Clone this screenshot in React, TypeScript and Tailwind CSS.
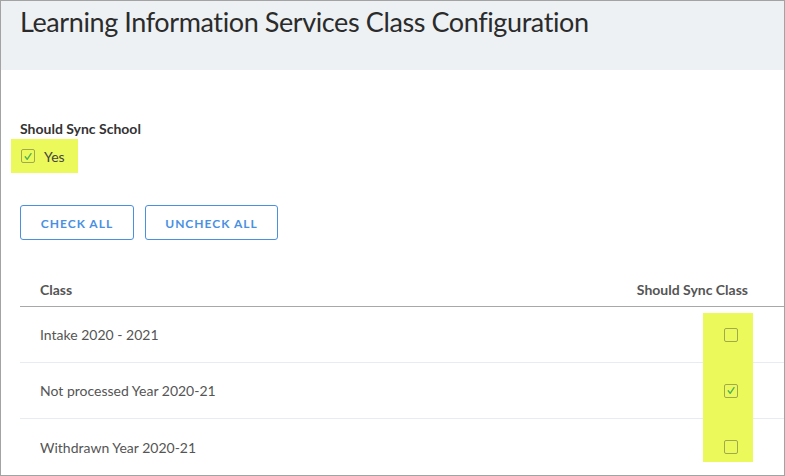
import React from "react";

const Check = () => (
  <svg viewBox="0 0 13 13" className="w-[13px] h-[13px]">
    <path d="M3.5 6.8 L5.6 9.6 L9.8 3.4" fill="none" stroke="#4fb35a" strokeWidth="1.5" strokeLinecap="round" strokeLinejoin="round" />
  </svg>
);

const Box = ({ checked }: { checked?: boolean }) => (
  <span className="relative z-10 flex items-center justify-center w-[14px] h-[14px] border border-[#a2a84c] rounded-[2px]">
    {checked && <Check />}
  </span>
);

const rows = [
  { name: "Intake 2020 - 2021", checked: false },
  { name: "Not processed Year 2020-21", checked: true },
  { name: "Withdrawn Year 2020-21", checked: false },
];

export default function App() {
  return (
    <div className="w-[785px] h-[476px] border border-[#a3a3a3] bg-white overflow-hidden font-['Lato',sans-serif]">
      <div className="h-[69px] bg-[#edf1f4] px-[19px] pt-[3px]">
        <h1 className="text-[27px] leading-[36px] text-[#2b2b2b] tracking-[-0.4px]">
          Learning Information Services Class Configuration
        </h1>
      </div>

      <div className="pl-[19px]">
        <div className="mt-[49px] text-[14px] leading-[19px] font-bold text-[#333]">Should Sync School</div>
        <div className="mt-[1px] -ml-[9px] inline-flex items-center gap-[9px] h-[34px] pl-[10px] pr-[13px] bg-[#ecf95b]">
          <Box checked />
          <span className="text-[14px] text-[#444]">Yes</span>
        </div>

        <div className="mt-[32px] flex gap-[11px]">
          <button className="w-[114px] h-[35px] pt-[2px] border border-[#4a90e2] rounded-[3px] text-[#4a90e2] text-[12px] font-bold tracking-[1px]">
            CHECK ALL
          </button>
          <button className="w-[133px] h-[35px] pt-[2px] border border-[#4a90e2] rounded-[3px] text-[#4a90e2] text-[12px] font-bold tracking-[1px]">
            UNCHECK ALL
          </button>
        </div>

        <div className="relative mt-[32px]">
          <div className="flex items-center justify-between h-[35px] pl-5 pr-[36px] border-b border-[#a8a8a8] text-[14px] font-bold text-[#555]">
            <span>Class</span>
            <span>Should Sync Class</span>
          </div>
          <div className="absolute left-[683px] top-[41px] w-[50px] h-[149px] bg-[#ecf95b] z-[5]" />
          {rows.map((r, i) => (
            <div
              key={r.name}
              className={`flex items-center justify-between h-[56px] pl-5 ${i < rows.length - 1 ? "border-b border-[#e8ebef]" : ""}`}
            >
              <span className="text-[14px] text-[#555]">{r.name}</span>
              <span className="w-[50px] mr-[28px] flex justify-center">
                <Box checked={r.checked} />
              </span>
            </div>
          ))}
        </div>
      </div>
    </div>
  );
}
